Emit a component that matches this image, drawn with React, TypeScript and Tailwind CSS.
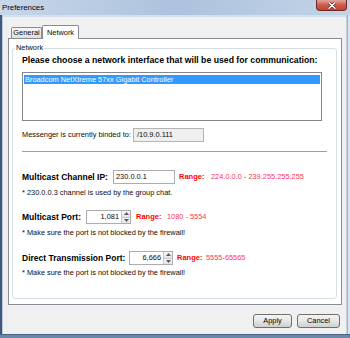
import React from "react";

function Arrow({ up }: { up: boolean }) {
  return (
    <svg width="5" height="3" viewBox="0 0 5 3" className="block">
      {up ? <path d="M0 3 L2.5 0 L5 3 Z" fill="#5a5a5a" /> : <path d="M0 0 L2.5 3 L5 0 Z" fill="#5a5a5a" />}
    </svg>
  );
}

function Spinner({ value, className }: { value: string; className: string }) {
  return (
    <div className={"flex h-[14px] border border-[#abadb3] bg-white " + className}>
      <div className="flex-1 text-right pr-[2px] leading-[12px]">{value}</div>
      <div className="w-[9px] flex flex-col border-l border-[#c9c9c9]">
        <div className="flex-1 flex items-center justify-center bg-gradient-to-b from-[#f7f7f7] to-[#e4e4e4] border-b border-[#c9c9c9]">
          <Arrow up={true} />
        </div>
        <div className="flex-1 flex items-center justify-center bg-gradient-to-b from-[#f7f7f7] to-[#e4e4e4]">
          <Arrow up={false} />
        </div>
      </div>
    </div>
  );
}

function Button({ label, className }: { label: string; className: string }) {
  return (
    <div
      className={
        "h-[14px] rounded-[3px] border border-[#707070] flex items-center justify-center leading-[12px] text-black bg-gradient-to-b from-[#f4f4f4] via-[#e6e6e6] to-[#cfcfcf] " +
        className
      }
    >
      {label}
    </div>
  );
}

export default function App() {
  return (
    <div className="w-[350px] h-[338px] flex flex-col overflow-hidden font-['Liberation_Sans',Arial,sans-serif] text-[7.4px] text-[#0a0a0a] bg-[#d4e0ee]">
      {/* title bar */}
      <div className="relative h-[15px] shrink-0 flex items-center pl-[2px] bg-gradient-to-r from-[#c8d7ea] via-[#acc2dd] to-[#c3d4e8]">
        <span className="text-[7.8px] text-black leading-[10px]">Preferences</span>
        <div className="absolute top-0 right-[3px] w-[31px] h-[11px] rounded-b-[4px] border border-t-0 border-[#6e2a22] bg-gradient-to-b from-[#e3a497] via-[#cc5c4b] to-[#c8412e] flex items-center justify-center">
          <svg width="8" height="7" viewBox="0 0 8 7">
            <path d="M1 0.8 L7 6.2 M7 0.8 L1 6.2" stroke="#5a1a12" strokeWidth="2.6" strokeLinecap="round" />
            <path d="M1 0.8 L7 6.2 M7 0.8 L1 6.2" stroke="#ffffff" strokeWidth="1.5" strokeLinecap="round" />
          </svg>
        </div>
      </div>

      {/* body */}
      <div className="flex-1 flex">
        <div className="w-[3px] flex">
          <div className="w-[2px] bg-[#42587a]" />
          <div className="w-[1px] bg-[#b9c8db]" />
        </div>
        <div className="flex-1 flex flex-col pt-[2px]">
          <div className="flex-1 flex flex-col bg-[#f0f0f0] pl-[5px] pr-[4px] pt-[8px]">
            {/* tabs */}
            <div className="flex items-end h-[13px] pl-[3px] relative z-10">
              <div className="w-[31px] h-[11px] border border-b-0 border-[#898c95] rounded-t-[2px] bg-gradient-to-b from-[#f5f5f5] to-[#dfdfdf] flex items-center justify-center leading-[10px]">
                General
              </div>
              <div className="w-[37px] h-[14px] -mb-px border border-b-0 border-[#898c95] rounded-t-[2px] bg-white flex items-center justify-center leading-[10px]">
                Network
              </div>
            </div>
            {/* panel */}
            <div className="h-[267px] bg-white border border-[#898c95] flex flex-col pt-[9px] pb-[5px] pl-[3px] pr-[4px]">
              <div className="flex-1 relative border border-[#d5dfe5] rounded-[3px] pl-[9px] pr-[9px] flex flex-col">
                <span className="absolute top-[-6px] left-[2px] px-[1px] bg-white leading-[10px]">Network</span>
                <div className="mt-[6px] h-[10px] leading-[10px] font-bold text-[8.7px] text-black whitespace-nowrap">
                  Please choose a network interface that will be used for communication:
                </div>
                <div className="mt-[7px] h-[49px] mr-[5px] border border-[#828790] bg-white pt-[2px] px-[1px]">
                  <div className="h-[9px] bg-[#3399ff] text-white leading-[9px] pl-[1px] whitespace-nowrap">
                    Broadcom NetXtreme 57xx Gigabit Controller
                  </div>
                </div>
                <div className="mt-[7px] h-[14px] flex items-center">
                  <div className="w-[111px] whitespace-nowrap">Messenger is currently binded to:</div>
                  <div className="w-[71px] h-[14px] border border-[#b4b4b4] bg-[#efefef] pl-[3px] leading-[12px]">/10.9.0.111</div>
                </div>
                <div className="mt-[9px] border-t border-b border-t-[#a0a0a0] border-b-white" />

                <div className="mt-[17px] h-[14px] flex items-center whitespace-nowrap">
                  <div className="w-[91px] font-bold text-[8.5px] text-black">Multicast Channel IP:</div>
                  <div className="w-[62px] h-[14px] border border-[#abadb3] bg-white pl-[2px] leading-[12px]">230.0.0.1</div>
                  <div className="ml-[4px] w-[32px] font-bold text-[7.5px] text-[#ff0000]">Range:</div>
                  <div className="text-[#ff3358]">224.0.0.0 - 239.255.255.255</div>
                </div>
                <div className="mt-[4px] h-[10px] leading-[10px] whitespace-nowrap">* 230.0.0.3 channel is used by the group chat.</div>

                <div className="mt-[12px] h-[14px] flex items-center whitespace-nowrap">
                  <div className="w-[64px] font-bold text-[8.5px] text-black">Multicast Port:</div>
                  <Spinner value="1,081" className="w-[45px]" />
                  <div className="ml-[5px] w-[31px] font-bold text-[7.5px] text-[#ff0000]">Range:</div>
                  <div className="text-[#ff3358]">1080 - 5554</div>
                </div>
                <div className="mt-[4px] h-[10px] leading-[10px] whitespace-nowrap">* Make sure the port is not blocked by the firewall!</div>

                <div className="mt-[13px] h-[14px] flex items-center whitespace-nowrap">
                  <div className="w-[107px] font-bold text-[8.5px] text-black">Direct Transmission Port:</div>
                  <Spinner value="6,666" className="w-[44px]" />
                  <div className="ml-[4px] w-[29px] font-bold text-[7.5px] text-[#ff0000]">Range:</div>
                  <div className="text-[#ff3358]">5555-65565</div>
                </div>
                <div className="mt-[3px] h-[10px] leading-[10px] whitespace-nowrap">* Make sure the port is not blocked by the firewall!</div>
              </div>
            </div>
            {/* buttons */}
            <div className="mt-[9px] flex justify-end gap-[5px] pr-[2px]">
              <Button label="Apply" className="w-[39px]" />
              <Button label="Cancel" className="w-[43px]" />
            </div>
          </div>
        </div>
        <div className="w-[4px] flex">
          <div className="w-[1px] bg-[#c2d0e0]" />
          <div className="w-[1px] bg-[#9fb2c9]" />
          <div className="flex-1 bg-[#d9e4f0]" />
        </div>
      </div>

      {/* bottom frame */}
      <div className="h-[4px] shrink-0 flex flex-col">
        <div className="h-[1px] bg-[#4a6484]" />
        <div className="flex-1 bg-[#6a88ab]" />
      </div>
    </div>
  );
}
